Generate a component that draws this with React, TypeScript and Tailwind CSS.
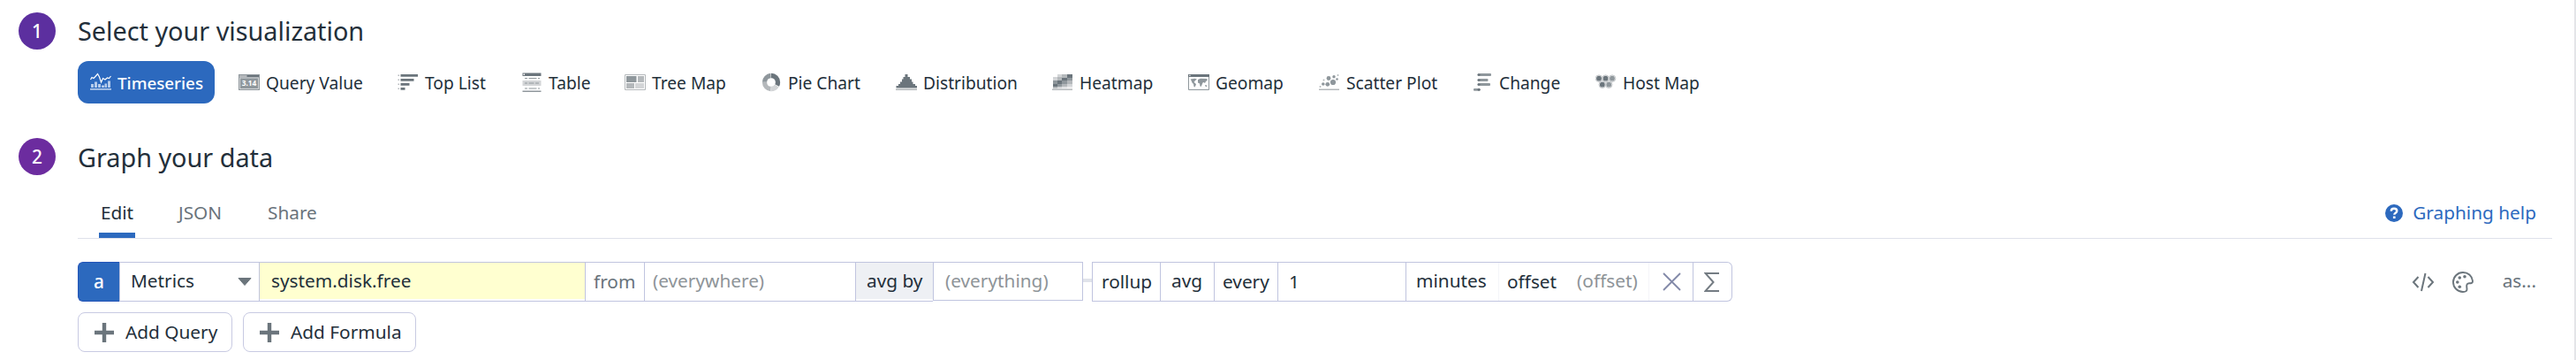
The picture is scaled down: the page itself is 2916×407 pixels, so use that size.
import React from "react";

const D = "#6b757c";
const M = "#8f979c";
const L = "#b4b8bb";
const X = "#d3d5d7";

function Svg({ children }: { children: React.ReactNode }) {
  return (
    <svg width="24" height="24" viewBox="0 0 24 24" className="shrink-0">
      {children}
    </svg>
  );
}

const TimeseriesIcon = () => (
  <Svg>
    <path d="M0.5 8 L2 5.500 L4 6.500 L6 4.500 L8.500 1.500 L10.500 5 L12.500 11 L14.500 6.500 L17 8 L19.500 6 L21.500 6.500 L23.500 4" fill="none" stroke="#fff" strokeWidth="1.200" />
    <g fill="#b5cbeb">
      <path d="M1 13h3v4H1zM5 10.500h3v6.500H5zM9 13h3v4H9zM13 14.500h3v2.500h-3zM16.500 12.500h2.500v4.500h-2.500zM20 9.500h3v7.500h-3z" />
      <path d="M0 18h24v1.700H0z" />
    </g>
  </Svg>
);

const QueryIcon = () => (
  <Svg>
    <path d="M0 2h24v18H0z" fill={M} />
    <path d="M1 3h8v2H1z" fill={L} />
    <path d="M10 3h13v2H10z" fill={D} />
    <path d="M1 5.500h22v1H1zM1 18h22v1H1zM1 6h1v12H1zM22 6h1v12h-1z" fill={X} />
    <text x="12" y="15.300" textAnchor="middle" fontSize="8.300" fontWeight="700" fill="#fff" fontFamily="Noto Sans, sans-serif">3.14</text>
  </Svg>
);

const TopListIcon = () => (
  <Svg>
    <path d="M3.500 2H23v2.700H3.500zM3.500 7H18.500v2.700H3.500zM3.500 12H13.500v2.700H3.500zM3.500 17H8.500v2.700H3.500z" fill={D} />
    <path d="M.5 2.500H2V4H.5zM.5 7.500H2V9H.5zM.5 12.500H2V14H.5zM.5 17.500H2V19H.5z" fill={L} />
  </Svg>
);

const TableIcon = () => (
  <Svg>
    <path d="M1.500 0.500h21v3.500h-21z" fill={D} />
    <path d="M2.500 1.500h1.500v1.500H2.500z" fill="#fff" />
    <path d="M1.500 9h21v6h-21z" fill={X} />
    <path d="M4 6h3v1H4zM8.500 6h9v1h-9zM19 6h2v1h-2zM4 11.500h3v1H4zM8.500 11.500h6v1h-6zM16 11.500h4v1h-4zM4 17.500h3v1H4zM8.500 17.500h9v1h-9zM19 17.500h2v1h-2z" fill={M} />
    <path d="M1.500 20.500h21v1.500h-21z" fill={M} />
  </Svg>
);

const TreeIcon = () => (
  <Svg>
    <path d="M.5 2.500h23v17H.5z" fill="#fff" stroke={L} />
    <path d="M2 4h11.500v7H2z" fill={M} />
    <path d="M15 4h7v7h-7zM2 12h9v6H2z" fill={L} />
    <path d="M12 12h10v6H12z" fill={X} />
  </Svg>
);

const PieIcon = () => (
  <Svg>
    <g fill="none" strokeWidth="5.300">
      <circle cx="12" cy="11" r="7.500" stroke={D} pathLength="100" strokeDasharray="33 67" transform="rotate(-90 12 11)" />
      <circle cx="12" cy="11" r="7.500" stroke={X} pathLength="100" strokeDasharray="16 84" strokeDashoffset="-34" transform="rotate(-90 12 11)" />
      <circle cx="12" cy="11" r="7.500" stroke={L} pathLength="100" strokeDasharray="24 76" strokeDashoffset="-51" transform="rotate(-90 12 11)" />
      <circle cx="12" cy="11" r="7.500" stroke={M} pathLength="100" strokeDasharray="23.500 76.500" strokeDashoffset="-75.500" transform="rotate(-90 12 11)" />
    </g>
  </Svg>
);

const DistributionIcon = () => (
  <Svg>
    <path d="M10.500 2h3v3h2.500v2.500h2v3h1.500v2.500h2.500v2h2v2.500H.5V15h2.500v-2h2v-2.500h2v-3h1.500V5h2z" fill={D} />
    <path d="M0 18.500h24v1.500H0z" fill={L} />
  </Svg>
);

const HEAT = [
  [6, 2, 5, 3, X], [11, 2, 6, 4, L], [17, 2, 6, 4, D],
  [1, 5, 5, 4, X], [6, 5, 5, 4, L], [11, 6, 6, 3, D], [17, 6, 6, 3, M],
  [1, 9, 5, 4, M], [6, 9, 5, 4, D], [11, 9, 6, 4, M], [17, 9, 6, 4, L],
  [1, 13, 5, 3, D], [6, 13, 5, 3, M], [11, 13, 6, 3, L], [17, 13, 6, 3, X],
  [1, 16, 5, 2, L], [6, 16, 5, 2, X], [11, 16, 6, 2, "#e3e4e6"], [17, 16, 6, 2, "#eeeeef"],
] as const;

const HeatIcon = () => (
  <Svg>
    {HEAT.map(([x, y, w, h, c], i) => (
      <rect key={i} x={x} y={y} width={w} height={h} fill={c} />
    ))}
    <path d="M0 18.500h23v1.500H0z" fill={L} />
  </Svg>
);

const GeoIcon = () => (
  <Svg>
    <path d="M.5 2.500h23v17H.5z" fill="#fff" stroke={M} />
    <path d="M0 2h24v3H0z" fill={D} />
    <path d="M1.300 2.800h1.200v1.200H1.300z" fill="#fff" />
    <path d="M2.500 7.500l5-.8 2.500.8-2 1.500-1.500 2 1.500 1 1 1.500-1.500 3-1-.5-.5-3-1.500-1.500-1-2.500zM11 8l3-1.200 7 .2 1 1.500-2 1.500-1 2-1.500-1-1 .5-1 2.500-1 2-1-.5-.5-3-2-1zM19 14l2 .5.500 1.500-2-.2z" fill={M} />
  </Svg>
);

const ScatterIcon = () => (
  <Svg>
    <g fill={M}>
      <circle cx="11" cy="6.500" r="2.400" />
      <circle cx="17" cy="4.800" r="1.700" />
      <circle cx="16" cy="11" r="3.100" />
      <circle cx="9.800" cy="13.300" r="2.400" />
      <circle cx="4.800" cy="13" r="1.800" />
      <circle cx="20.500" cy="7.500" r="1.300" />
      <circle cx="21.500" cy="3" r="1" fill={L} />
      <circle cx="5.500" cy="8.500" r="1" fill={L} />
      <circle cx="1.500" cy="16" r="1" fill={L} />
    </g>
    <path d="M0 18.500h23v1.500H0z" fill={L} />
  </Svg>
);

const ChangeIcon = () => (
  <Svg>
    <g fill={M}>
      <rect x="8.500" y="1" width="13.500" height="3" rx="1" />
      <rect x="8.500" y="7" width="10" height="3" rx="1" />
      <rect x="8.500" y="12" width="12.500" height="3" rx="1" />
      <rect x="2" y="18" width="6" height="2.700" rx="1" />
    </g>
    <g fill={D}>
      <circle cx="8" cy="2.500" r="1.600" />
      <circle cx="8" cy="8.500" r="1.600" />
      <circle cx="8" cy="13.500" r="1.600" />
      <circle cx="8.200" cy="19.300" r="1.600" />
    </g>
  </Svg>
);

const HostIcon = () => (
  <Svg>
    <g stroke={L} strokeWidth=".800">
      {[[4, 6.700], [11.500, 6.700], [19, 6.700], [7.800, 13.700], [15.200, 13.700]].map(([x, y], i) => (
        <g key={i}>
          <circle cx={x} cy={y} r="3.800" fill="#fff" />
          <circle cx={x} cy={y} r="2.900" fill={i === 2 || i === 4 ? M : D} stroke="none" />
        </g>
      ))}
    </g>
  </Svg>
);

function Item({ w, icon, children, active }: { w: string; icon: React.ReactNode; children: string; active?: boolean }) {
  return (
    <div className={`${w} shrink-0`}>
      <div className={`flex h-12 items-center gap-[7px] rounded-xl pt-[2px] pl-[14px] ${active ? "w-[155px] bg-[#2c69be] text-[18.800px] font-medium text-white" : "w-fit"}`}>
        {icon}
        <span>{children}</span>
      </div>
    </div>
  );
}

const Step = ({ c, children }: { c: string; children: string }) => (
  <div className={`${c} flex size-[42px] shrink-0 items-center justify-center rounded-full text-[20.800px] font-medium text-white`}>{children}</div>
);

function Cell({ w, c, children }: { w: string; c?: string; children?: React.ReactNode }) {
  return (
    <div className={`${w} ${c ?? ""} flex h-full shrink-0 items-center whitespace-nowrap border-l border-[#c0c4df]`}>{children}</div>
  );
}

function AddButton({ w, children }: { w: string; children: string }) {
  return (
    <button className={`${w} flex h-[45px] items-center rounded-lg border border-[#c8cae2] pl-[18px]`}>
      <svg width="22" height="22" viewBox="0 0 22 22"><path d="M8.800 0h4.400v8.800H22v4.400h-8.800V22H8.800v-8.800H0V8.800h8.800z" fill={D} /></svg>
      <span className="ml-[13px]">{children}</span>
    </button>
  );
}

export default function App() {
  return (
    <div className="flex h-[407px] w-[2916px] overflow-hidden bg-white font-['Noto_Sans',sans-serif] text-[20.800px] leading-none whitespace-nowrap text-[#232f3a]">
      <main className="w-[2914px] shrink-0 pt-[14px] pl-[21px]">
        <div className="flex h-[42px] items-center">
          <Step c="bg-[#5c2f9f]">1</Step>
          <h2 className="ml-[25px] text-[28.800px]">Select your visualization</h2>
        </div>
        <div className="mt-[13px] ml-[67px] flex h-12 text-[19.200px]">
          <Item w="w-[168px]" icon={<TimeseriesIcon />} active>Timeseries</Item>
          <Item w="w-[180px]" icon={<QueryIcon />}>Query Value</Item>
          <Item w="w-[140px]" icon={<TopListIcon />}>Top List</Item>
          <Item w="w-[117px]" icon={<TableIcon />}>Table</Item>
          <Item w="w-[154px]" icon={<TreeIcon />}>Tree Map</Item>
          <Item w="w-[153px]" icon={<PieIcon />}>Pie Chart</Item>
          <Item w="w-[177px]" icon={<DistributionIcon />}>Distribution</Item>
          <Item w="w-[154px]" icon={<HeatIcon />}>Heatmap</Item>
          <Item w="w-[148px]" icon={<GeoIcon />}>Geomap</Item>
          <Item w="w-[173px]" icon={<ScatterIcon />}>Scatter Plot</Item>
          <Item w="w-[140px]" icon={<ChangeIcon />}>Change</Item>
          <Item w="w-[150px]" icon={<HostIcon />}>Host Map</Item>
        </div>
        <div className="mt-[39px] flex h-[42px] items-center">
          <Step c="bg-[#6c2c9f]">2</Step>
          <h2 className="ml-[25px] pt-[2px] text-[28.800px]">Graph your data</h2>
        </div>
        <div className="mt-[12px] ml-[67px] flex h-[60px] w-[2801px] border-b border-[#dfe1ea] text-[#69737b]">
          <div className="ml-[24px] flex h-[59px] w-[41px] justify-center border-b-[6px] border-[#2c69be] pt-[20px] text-[#232f3a]">Edit</div>
          <div className="ml-[49px] w-[54px] pt-[20px]">JSON</div>
          <div className="ml-[47px] pt-[20px]">Share</div>
          <div className="mr-[18px] ml-auto flex pt-[20px] text-[#2c69be]">
            <svg width="20" height="20" viewBox="0 0 20 20" className="mt-[1px] mr-[11px]">
              <circle cx="10" cy="10" r="10" fill="#2c69be" />
              <path d="M6.800 7.700C6.800 5.700 8.200 4.700 10 4.700s3.300 1.100 3.300 2.800c0 2.300-3 2.100-3 4.300" fill="none" stroke="#fff" strokeWidth="2.400" />
              <path d="M8.900 13.500h2.700v2.500H8.900z" fill="#fff" />
            </svg>
            Graphing help
          </div>
        </div>
        <div className="mt-[26px] ml-[67px] flex h-[45px] w-[2801px]">
          <div className="flex h-[45px] w-[47px] items-center justify-center rounded-l-md border border-r-0 border-[#2455b8] bg-[#2c69be] font-medium text-white">a</div>
          <div className="flex h-[45px] w-[833px] border-y border-[#c0c4df]">
            <Cell w="w-[158px]" c="pr-[8px] pb-[2px] pl-[12px]">
              Metrics
              <svg width="16" height="9" viewBox="0 0 16 9" className="mt-[2px] ml-auto"><path d="M1 .5h14L8 8.500z" fill={D} stroke={D} strokeLinejoin="round" /></svg>
            </Cell>
            <Cell w="w-[369px]">
              <div className="mb-[2px] flex h-[41px] w-full items-center bg-[#ffffd0] pl-[13px]">system.disk.free</div>
            </Cell>
            <Cell w="w-[67px]" c="pl-[9px] text-[#69737b]">from</Cell>
            <Cell w="w-[239px]" c="pb-[2px] pl-[9px] text-[#8e9498]">(everywhere)</Cell>
          </div>
          <div className="flex h-[45px] border-y border-[#c0c4df]">
            <Cell w="w-[88px]">
              <div className="mb-[2px] flex h-[41px] w-full items-center bg-[#eef0f4] pl-[12px]">avg by</div>
            </Cell>
          </div>
          <div className="flex h-[44px] w-[170px] shrink-0 items-center border border-[#c0c4df] pb-[2px] pl-[13px] text-[#8e9498]">(everything)</div>
          <div className="mt-[19px] h-[4px] w-[10px] bg-[#e0e3ea]" />
          <div className="flex h-[45px] w-[725px] rounded-r-md border border-l-0 border-[#c0c4df]">
            <Cell w="w-[77px]" c="pl-[10px]">rollup</Cell>
            <Cell w="w-[61px]" c="pb-[2px] pl-[12px]">avg</Cell>
            <Cell w="w-[72px]" c="pl-[9px]">every</Cell>
            <Cell w="w-[145px]" c="pl-[12px]">1</Cell>
            <Cell w="w-[105px]" c="pb-[2px] pl-[11px]">minutes</Cell>
            <div className="flex w-[171px] shrink-0 items-center border-x border-[#f4f5f9] pl-[9px]">
              <span>offset</span>
              <span className="ml-[23px] pb-[2px] text-[#8e9498]">(offset)</span>
            </div>
            <div className="flex w-[49px] shrink-0 items-center pl-[15px]">
              <svg width="21" height="21" viewBox="0 0 21 21"><path d="M1 1l19 19M20 1L1 20" stroke="#8289a8" strokeWidth="1.800" fill="none" /></svg>
            </div>
            <Cell w="w-[44px]" c="pl-[12px]">
              <svg width="18" height="24" viewBox="0 0 18 24"><path d="M17 2H1.500L10.500 12L1.500 22H17" fill="none" stroke="#747c83" strokeWidth="2" /></svg>
            </Cell>
          </div>
          <div className="mr-[18px] ml-auto flex h-[45px] items-center text-[#69737b]">
            <svg width="26" height="22" viewBox="0 0 26 22" fill="none" stroke={D} strokeWidth="2"><path d="M7.500 5L2 11l5.500 6M18.500 5l5.500 6-5.500 6M15.500 1l-4.500 20" /></svg>
            <svg width="24" height="24" viewBox="0 0 24 24" className="ml-[20px]">
              <path d="M12 1C5.900 1 1 5.900 1 12s4.900 11 11 11c3.500 0 4.700-1.200 4.500-3.500C16.200 16.500 15.500 13.500 19 13.300c2.500-.1 4.200-.3 4-2.800C22.500 5 18 1 12 1z" fill="none" stroke={D} strokeWidth="1.900" />
              <g fill={D}><circle cx="8.300" cy="7" r="1.800" /><circle cx="14" cy="5.800" r="1.800" /><circle cx="5.800" cy="12" r="1.800" /><circle cx="8.300" cy="17.300" r="1.800" /></g>
            </svg>
            <span className="ml-[33px] pb-[2px]">as...</span>
          </div>
        </div>
        <div className="mt-[12px] ml-[67px] flex gap-[12px]">
          <AddButton w="w-[175px]">Add Query</AddButton>
          <AddButton w="w-[196px]">Add Formula</AddButton>
        </div>
      </main>
      <div className="h-full w-[2px] bg-[#e4e5e8]" />
    </div>
  );
}
